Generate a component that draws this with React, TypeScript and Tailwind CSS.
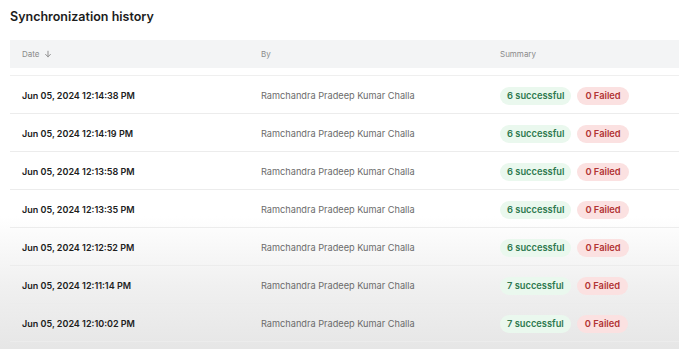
import React from 'react';

const rows = [
  { date: 'Jun 05, 2024 12:14:38 PM', ok: 6 },
  { date: 'Jun 05, 2024 12:14:19 PM', ok: 6 },
  { date: 'Jun 05, 2024 12:13:58 PM', ok: 6 },
  { date: 'Jun 05, 2024 12:13:35 PM', ok: 6 },
  { date: 'Jun 05, 2024 12:12:52 PM', ok: 6 },
  { date: 'Jun 05, 2024 12:11:14 PM', ok: 7 },
  { date: 'Jun 05, 2024 12:10:02 PM', ok: 7 },
];

function App() {
  return (
    <div className="h-[349px] w-[679px] overflow-hidden bg-[linear-gradient(to_bottom,#ffffff_0%,#ffffff_62%,#f0f0f0_82%,#e6e6e6_100%)] font-['Inter',sans-serif]">
      <h1 className="pl-[10px] pt-[9px] text-[12.5px] font-semibold leading-[16px] text-[#1c1c1c]">Synchronization history</h1>
      <div className="ml-[10px] mt-[15px]">
        <div className="grid h-[28px] grid-cols-[239px_239px_1fr] items-center bg-[#f3f4f5] text-[8px] text-[#8a8a8a]">
          <div className="flex items-center gap-[5px] pl-[12px]">
            Date
            <svg width="8" height="8" viewBox="0 0 10 10" fill="none" stroke="#8a8a8a" strokeWidth="1.2" strokeLinecap="round" strokeLinejoin="round">
              <path d="M5 1.5v7M2 5.5l3 3 3-3" />
            </svg>
          </div>
          <div className="pl-[12px]">By</div>
          <div className="pl-[12px]">Summary</div>
        </div>
        <div className="mt-[7px] border-t border-[#efefef]">
          {rows.map((r) => (
            <div key={r.date} className="grid h-[38px] grid-cols-[239px_239px_1fr] items-center border-b border-[#ececec] pt-[2px]">
              <div className="pl-[12px] text-[9px] font-semibold text-[#202020]">{r.date}</div>
              <div className="pl-[12px] text-[9.2px] text-[#6b6b6b]">Ramchandra Pradeep Kumar Challa</div>
              <div className="flex items-center gap-[6px] pl-[12px]">
                <span className="rounded-full bg-[#eaf8ee] px-[7px] py-[3px] text-[9.3px] font-semibold leading-[12px] text-[#2f7a50]">{r.ok} successful</span>
                <span className="rounded-full bg-[#fbe1e1] px-[8px] py-[3px] text-[9.3px] font-semibold leading-[12px] text-[#b23434]">0 Failed</span>
              </div>
            </div>
          ))}
        </div>
      </div>
    </div>
  );
}

export default App;
